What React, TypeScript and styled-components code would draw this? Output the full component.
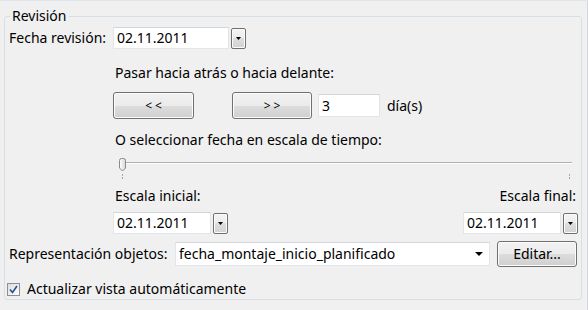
import * as React from "react";
import styled, { createGlobalStyle } from "styled-components";

const GlobalStyle = createGlobalStyle`
  html, body {
    margin: 0;
    padding: 0;
    background: #f0f0f0;
  }
  body {
    font-family: "Noto Sans", "Open Sans", sans-serif;
    font-size: 14px;
    line-height: 16px;
    color: #000;
  }
`;

const Frame = styled.div`
  width: 588px;
  height: 310px;
  box-sizing: border-box;
  border-top: 1px solid #dfe5ea;
  border-right: 1px solid #d4d8dc;
  padding: 7px 5px 0 4px;
`;

const GroupBox = styled.fieldset`
  margin: 0;
  height: 292px;
  box-sizing: border-box;
  border: 1px solid #d5dfe5;
  border-radius: 3px;
  padding: 0 3px 0 4px;
  display: flex;
  flex-direction: column;
`;

const Legend = styled.legend`
  padding: 0 2px;
  margin-left: 1px;
  line-height: 16px;
`;

const Row = styled.div<{ $top: number; $height: number }>`
  display: flex;
  align-items: center;
  margin-top: ${(p) => p.$top}px;
  height: ${(p) => p.$height}px;
`;

const FieldLabel = styled.span<{ $w: number }>`
  width: ${(p) => p.$w}px;
  flex: none;
  white-space: nowrap;
`;

const Indent = styled.div`
  padding-left: 104px;
  display: flex;
  flex-direction: column;
`;

const Caption = styled.div<{ $top: number }>`
  margin-top: ${(p) => p.$top}px;
  padding-left: 2px;
  white-space: nowrap;
`;

const SplitRow = styled.div<{ $top: number }>`
  display: flex;
  justify-content: space-between;
  align-items: center;
  margin-top: ${(p) => p.$top}px;
  padding: 0 2px;
`;

const DateRow = styled.div<{ $top: number }>`
  display: flex;
  justify-content: space-between;
  margin-top: ${(p) => p.$top}px;
`;

const Field = styled.div<{ $w: number; $h: number }>`
  width: ${(p) => p.$w}px;
  height: ${(p) => p.$h}px;
  box-sizing: border-box;
  background: #fff;
  border: 1px solid #e2e5e9;
  border-top-color: #d2d5d9;
  padding-left: 3px;
  display: flex;
  align-items: center;
  flex: none;
  white-space: nowrap;
`;

const DateWrap = styled.div`
  display: flex;
  align-items: center;
  gap: 2px;
`;

const MiniButton = styled.div`
  width: 15px;
  height: 21px;
  box-sizing: border-box;
  border: 1px solid #707070;
  border-radius: 2px;
  background: linear-gradient(#f4f4f4 0%, #ececec 50%, #dedede 50%, #d2d2d2 100%);
  box-shadow: inset 0 0 0 1px #fbfbfb;
  display: flex;
  align-items: center;
  justify-content: center;
`;

const PushButton = styled.button<{ $w: number; $h: number }>`
  width: ${(p) => p.$w}px;
  height: ${(p) => p.$h}px;
  box-sizing: border-box;
  border: 1px solid #707070;
  border-radius: 3px;
  background: linear-gradient(#f2f2f2 0%, #ebebeb 50%, #dddddd 50%, #cfcfcf 100%);
  box-shadow: inset 0 0 0 1px #fcfcfc;
  font: inherit;
  color: #000;
  padding: 0;
  flex: none;
`;

const Arrows = styled.span`
  letter-spacing: 3px;
  margin-right: -3px;
  font-size: 12px;
`;

const Slider = styled.div`
  position: relative;
  margin-top: 9px;
  height: 22px;
`;

const Track = styled.div`
  position: absolute;
  left: 7px;
  right: 6px;
  top: 5px;
  height: 0;
  border-top: 1px solid #b0b0b0;
  border-bottom: 1px solid #ffffff;
`;

const Thumb = styled.svg`
  position: absolute;
  left: 5px;
  top: 1px;
`;

const Tick = styled.div<{ $left: number }>`
  position: absolute;
  left: ${(p) => p.$left}px;
  top: 17px;
  width: 1px;
  height: 5px;
  background: repeating-linear-gradient(#a8a8a8 0 2px, transparent 2px 3px);
`;

const Combo = styled(Field)`
  justify-content: space-between;
  padding-right: 6px;
`;

const CheckRow = styled.label`
  display: flex;
  align-items: center;
  margin-top: 14px;
  margin-left: -2px;
  height: 16px;
  gap: 7px;
`;

const CheckBox = styled.span`
  width: 13px;
  height: 13px;
  box-sizing: border-box;
  border: 1px solid #8e8f8f;
  background: linear-gradient(135deg, #dcdcdc, #ffffff);
  display: flex;
  align-items: center;
  justify-content: center;
`;

const DownArrow = ({ w = 5, h = 3 }: { w?: number; h?: number }) => (
  <svg width={w} height={h} viewBox={`0 0 ${w} ${h}`}>
    <path d={`M0 0H${w}L${w / 2} ${h}Z`} fill="#000" />
  </svg>
);

const DatePicker = ({ width, value }: { width: number; value: string }) => (
  <DateWrap>
    <Field $w={width} $h={22}>{value}</Field>
    <MiniButton>
      <DownArrow />
    </MiniButton>
  </DateWrap>
);

export default function App() {
  return (
    <>
      <GlobalStyle />
      <Frame>
        <GroupBox>
          <Legend>Revisión</Legend>

          <Row $top={3} $height={22}>
            <FieldLabel $w={104}>Fecha revisión:</FieldLabel>
            <DatePicker width={116} value="02.11.2011" />
          </Row>

          <Indent>
            <Caption $top={16}>Pasar hacia atrás o hacia delante:</Caption>

            <Row $top={11} $height={27}>
              <PushButton $w={81} $h={27}>
                <Arrows>&lt;&lt;</Arrows>
              </PushButton>
              <PushButton $w={80} $h={27} style={{ marginLeft: 38 }}>
                <Arrows>&gt;&gt;</Arrows>
              </PushButton>
              <Field $w={62} $h={23} style={{ marginLeft: 6 }}>3</Field>
              <span style={{ marginLeft: 7 }}>día(s)</span>
            </Row>

            <Caption $top={13}>O seleccionar fecha en escala de tiempo:</Caption>

            <Slider>
              <Track />
              <Thumb width="9" height="14" viewBox="0 0 9 14">
                <defs>
                  <linearGradient id="tg" x1="0" y1="0" x2="1" y2="0">
                    <stop offset="0" stopColor="#ffffff" />
                    <stop offset="1" stopColor="#d6d6d6" />
                  </linearGradient>
                </defs>
                <path
                  d="M1.5 2.5Q1.5 0.5 3.5 0.5H5.5Q7.5 0.5 7.5 2.5V10L4.5 13L1.5 10Z"
                  fill="url(#tg)"
                  stroke="#8a8a8a"
                />
              </Thumb>
              <Tick $left={9} />
              <Tick $left={456} />
            </Slider>

            <SplitRow $top={9}>
              <span>Escala inicial:</span>
              <span>Escala final:</span>
            </SplitRow>

            <DateRow $top={8}>
              <DatePicker width={98} value="02.11.2011" />
              <DatePicker width={98} value="02.11.2011" />
            </DateRow>
          </Indent>

          <Row $top={7} $height={26}>
            <FieldLabel $w={166}>Representación objetos:</FieldLabel>
            <Combo $w={315} $h={24}>
              <span>fecha_montaje_inicio_planificado</span>
              <DownArrow w={8} h={4} />
            </Combo>
            <PushButton $w={80} $h={26} style={{ marginLeft: 7 }}>
              Editar...
            </PushButton>
          </Row>

          <CheckRow>
            <CheckBox>
              <svg width="9" height="9" viewBox="0 0 9 9">
                <path
                  d="M1 4.5L3.5 7.5L8 1"
                  fill="none"
                  stroke="#2a4f9a"
                  strokeWidth="1.6"
                />
              </svg>
            </CheckBox>
            <span>Actualizar vista automáticamente</span>
          </CheckRow>
        </GroupBox>
      </Frame>
    </>
  );
}
